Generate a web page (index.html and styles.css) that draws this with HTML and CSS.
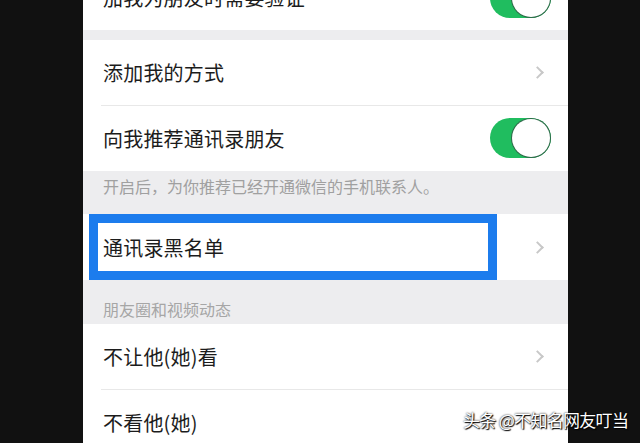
FILE: index.html
```html
<!DOCTYPE html>
<html lang="zh-CN">
<head>
    <meta charset="UTF-8">
    <meta name="viewport" content="width=device-width, initial-scale=1.0">
    <title>朋友权限</title>
    <link rel="stylesheet" href="styles.css">
</head>
<body>
    <div class="screen">
        <div class="list">
            <div class="group">
                <div class="row">
                    <span class="label">加我为朋友时需要验证</span>
                    <span class="switch on"></span>
                </div>
            </div>

            <div class="gap"></div>

            <div class="group">
                <div class="row">
                    <span class="label">添加我的方式</span>
                    <span class="chevron"></span>
                </div>
                <div class="row">
                    <span class="label">向我推荐通讯录朋友</span>
                    <span class="switch on"></span>
                </div>
            </div>
            <div class="tip">开启后，为你推荐已经开通微信的手机联系人。</div>

            <div class="group">
                <div class="row row-tall">
                    <span class="label">通讯录黑名单</span>
                    <span class="chevron"></span>
                    <!-- 截图上的蓝色标注框 -->
                    <span class="mark"></span>
                </div>
            </div>

            <div class="section-title">朋友圈和视频动态</div>
            <div class="group">
                <div class="row">
                    <span class="label">不让他(她)看</span>
                    <span class="chevron"></span>
                </div>
                <div class="row">
                    <span class="label">不看他(她)</span>
                    <span class="chevron"></span>
                </div>
            </div>
        </div>
    </div>

    <div class="watermark">头条 @不知名网友叮当</div>
</body>
</html>
```

FILE: styles.css
```css
* { box-sizing: border-box; }

body {
    font-family: 'Noto Sans CJK SC', 'Noto Sans', sans-serif;
    margin: 0;
    background: #111;
    overflow: hidden;
    height: 443px;
    position: relative;
}

.screen {
    width: 485px;
    height: 443px;
    margin-left: 83px;
    background: #ededef;
    overflow: hidden;
}

.list {
    margin-top: -35px;
}

.group {
    background: #fff;
}

.row {
    position: relative;
    display: flex;
    align-items: center;
    justify-content: space-between;
    height: 65px;
    padding: 0 17px 0 20px;
}

.row + .row {
    height: 66px;
}

/* 内缩的分隔线 */
.row + .row::before {
    content: '';
    position: absolute;
    top: 0;
    left: 18px;
    right: 0;
    height: 1px;
    background: #e8e8e8;
}

.row-tall {
    height: 66px;
}

.label {
    font-size: 20px;
    color: #1c1c1c;
    letter-spacing: 0.2px;
}

.switch {
    position: relative;
    width: 61px;
    height: 40px;
    border-radius: 20px;
    background: #20bd5f;
}

.switch::after {
    content: '';
    position: absolute;
    top: 1px;
    right: 1px;
    width: 38px;
    height: 38px;
    border-radius: 50%;
    background: #fff;
    box-shadow: 0 0 0 1px #2f6b4a;
}

.chevron {
    width: 9px;
    height: 9px;
    margin-right: 9px;
    border-top: 2px solid #c8c8c8;
    border-right: 2px solid #c8c8c8;
    transform: rotate(45deg);
}

.gap {
    height: 10px;
}

.tip {
    height: 43px;
    padding: 4px 20px 0;
    font-size: 16px;
    line-height: 22px;
    color: #a0a0a0;
}

.section-title {
    height: 44px;
    padding: 18px 20px 0;
    font-size: 16px;
    line-height: 22px;
    color: #a6a6a6;
}

.mark {
    position: absolute;
    left: 6px;
    top: 0;
    width: 408px;
    height: 66px;
    border: 9px solid #1c7ced;
}

.watermark {
    position: absolute;
    left: 463px;
    top: 409px;
    font-size: 17px;
    line-height: 22px;
    color: #fff;
    letter-spacing: -0.7px;
    text-shadow: 0 0 2px #000, 1px 1px 1px #000;
}
```
